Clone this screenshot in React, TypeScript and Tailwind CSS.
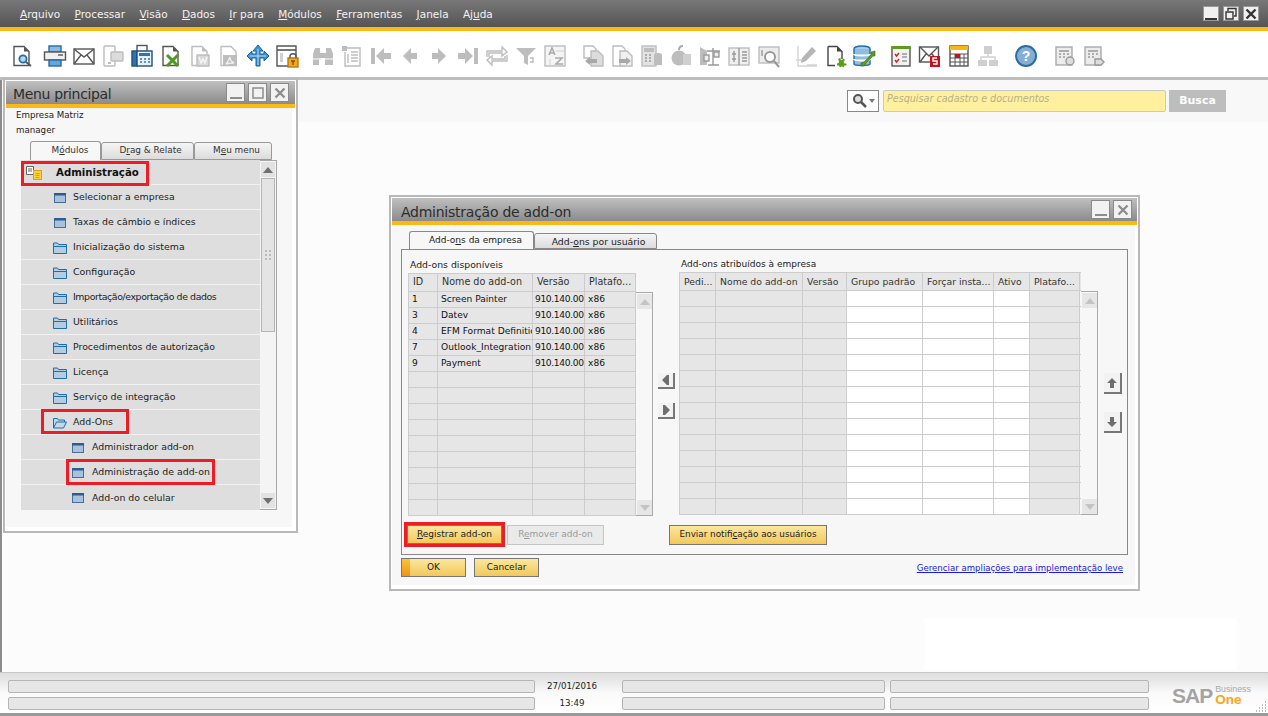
import * as React from "react";

const menus = ["Arquivo", "Processar", "Visão", "Dados", "Ir para", "Módulos", "Ferramentas", "Janela", "Ajuda"];

const G = "#bdbdbd";
const D = "#555555";
const B = "#1f6ea8";

function Ico({ children }: { children: React.ReactNode }) {
    return (
        <svg viewBox="0 0 24 24" className="w-6 h-6 shrink-0" fill="none" strokeWidth="1.4">
            {children}
        </svg>
    );
}

// page with a folded corner, used by lots of toolbar icons
const Page = ({ c = D }: { c?: string }) => (
    <>
        <path d="M4 2.5h10l5 5v14H4z" stroke={c} fill="#fff" />
        <path d="M14 2.5l5 5h-5z" fill={c} />
    </>
);

const toolbar: React.ReactNode[][] = [
    [
        <Ico><Page /><circle cx="13" cy="15" r="3.6" stroke={B} strokeWidth="1.8" fill="#bcd6ee" /><path d="M16 18l5 4" stroke={D} strokeWidth="2" /></Ico>,
    ],
    [
        <Ico><rect x="6" y="2" width="12" height="6" fill="#8fb9de" stroke={B} /><rect x="1.5" y="8" width="21" height="8" fill="#f0f0f0" stroke={D} /><path d="M15 11h5" stroke={D} /><rect x="6" y="16" width="12" height="6" fill="#6aa3d6" stroke={B} /></Ico>,
        <Ico><rect x="2" y="5" width="20" height="15" fill="#fff" stroke={D} /><path d="M2 5l10 8 10-8M2 20l7-9M22 20l-7-9" stroke={D} /></Ico>,
        <Ico><rect x="3" y="2" width="11" height="20" rx="1" stroke={G} fill="#fff" /><rect x="10" y="8" width="12" height="9" rx="1" fill="#dcdcdc" stroke={G} /><rect x="7" y="18" width="3" height="2" fill={G} /></Ico>,
        <Ico><rect x="7" y="1.5" width="10" height="6" fill="#fff" stroke={D} /><rect x="2" y="7" width="5" height="15" fill="#2f74ad" stroke="#1d4f7d" /><rect x="7" y="7" width="15" height="15" fill="#e8f0f7" stroke="#1d4f7d" /><rect x="9" y="9" width="11" height="3" fill="#2f74ad" /><path d="M10 15h2M14 15h2M18 15h2M10 18h2M14 18h2M18 18h2" stroke="#2f74ad" /></Ico>,
        <Ico><Page /><path d="M8 11l11 11M19 11L8 22" stroke="#4e9a1e" strokeWidth="3" /></Ico>,
        <Ico><Page c={G} /><rect x="9" y="11" width="12" height="11" fill="#d8d8d8" stroke={G} /><path d="M11 13l2 6 2-4 2 4 2-6" stroke="#f5f5f5" /></Ico>,
        <Ico><path d="M4 2.5h10l5 5v14H4z" stroke={G} fill="#fff" /><rect x="6" y="11" width="14" height="11" fill={G} /><path d="M9 20c2-2 3-5 4-7 0 3 2 5 4 6-3 0-5 0-8 1z" stroke="#eee" /></Ico>,
        <Ico><path d="M12 1l5 6h-3v3h4V7l5 5-5 5v-3h-4v8h-4v-8H6v3l-5-5 5-5v3h4V7H7z" fill="#3d94d6" stroke="#1d5f93" strokeWidth="1" /><path d="M12 5v16M4 12h16" stroke="#d5e9f8" strokeWidth=".8" /></Ico>,
        <Ico><path d="M13 22H2V2h19v11" fill="#fff" stroke={D} /><path d="M2 6h19" stroke={D} strokeWidth="1.6" /><rect x="5" y="9" width="3" height="9" fill="#d0d0d0" /><rect x="13" y="14" width="10" height="9" fill="#f5a81c" stroke="#b97a10" /><path d="M15 14v-2c0-3 6-3 6 0v2" stroke={D} /><path d="M16 17h4M18 17v4" stroke="#7a5206" /></Ico>,
    ],
    [
        <Ico><path d="M2 10l2-6h5v5h6V4h5l2 6v11h-8v-7h-6v7H2z" fill={G} /><path d="M2 15h8M14 15h8" stroke="#e8e8e8" /></Ico>,
        <Ico><rect x="2" y="2" width="5" height="5" fill={G} /><path d="M7 4h13v18H5V8M8 10v9M11 8h7M11 11h7M11 14h7M11 17h7" stroke={G} /></Ico>,
        <Ico><path d="M2 4h4v16H2zM22 9v6h-7v5L7 12l8-8v5z" fill={G} /></Ico>,
        <Ico><path d="M19 9v6h-6v5l-8-8 8-8v5z" fill={G} /></Ico>,
        <Ico><path d="M5 9v6h6v5l8-8-8-8v5z" fill={G} /></Ico>,
        <Ico><path d="M22 4h-4v16h4zM2 9v6h7v5l8-8-8-8v5z" fill={G} /></Ico>,
        <Ico><path d="M2 13V7h15V3l5 5-5 4V9H4v4M22 11v6H7v4l-5-5 5-4v3h13v-3" stroke={G} fill="#fff" /></Ico>,
        <Ico><path d="M2 4h20l-8 8v9l-4-2v-7z" fill={G} /><path d="M16 14h3v4h-3" stroke={G} /></Ico>,
        <Ico><rect x="2" y="2" width="20" height="20" fill="#f4f4f4" stroke={G} /><path d="M6 11l3-7 3 7M7 9h4M12 14h7l-6 6h7" stroke="#aaa" strokeWidth="1.6" /><path d="M13 7h8M7 15v6" stroke="#ddd" /></Ico>,
    ],
    [
        <Ico><path d="M3 2h9l3 3v9H3z" stroke={G} fill="#fff" /><path d="M10 7h7l5 5v10H10z" fill="#dcdcdc" stroke={G} /><path d="M4 17l5-4v2h7v4H9v2z" fill="#a8a8a8" /></Ico>,
        <Ico><path d="M3 2h9l3 3v17H3z" stroke={G} fill="#fff" /><path d="M10 7h7l5 5v10H10z" fill="#f0f0f0" stroke={G} /><path d="M21 17l-5-4v2H9v4h7v2z" fill="#a8a8a8" /></Ico>,
        <Ico><rect x="2" y="2" width="14" height="20" fill="#e3e3e3" stroke={G} /><rect x="4" y="4" width="10" height="4" fill={G} /><path d="M5 11h2M9 11h2M5 14h2M9 14h2M5 17h2M9 17h2" stroke="#999" /><ellipse cx="18" cy="11" rx="4" ry="2" fill={G} /><rect x="14" y="11" width="8" height="10" fill={G} /></Ico>,
        <Ico><circle cx="10" cy="14" r="7.5" fill={G} /><path d="M10 6c0-3 2-4 4-4" stroke="#aaa" strokeWidth="2" /><rect x="14" y="10" width="8" height="11" fill="#cfcfcf" /></Ico>,
        <Ico><path d="M2 3l7 4v14H2z" fill={G} /><path d="M9 7h13M15 4v17M10 21h11" stroke="#999" /><rect x="6" y="11" width="5" height="6" fill="#eee" stroke="#999" /><rect x="16" y="8" width="5" height="5" fill="#eee" stroke="#999" /></Ico>,
        <Ico><rect x="2" y="4" width="20" height="17" fill="#f0f0f0" stroke={G} /><path d="M12 4v17M15 8h5M15 11h5M15 14h5M15 17h5M7 7v11M5 10h4M5 15h4" stroke="#999" /></Ico>,
        <Ico><rect x="2" y="3" width="20" height="16" fill="#ececec" stroke={G} /><circle cx="13" cy="13" r="5" fill="#fff" stroke="#999" strokeWidth="2" /><path d="M17 17l5 6" stroke="#999" strokeWidth="2" /><path d="M5 6v6" stroke="#999" /></Ico>,
    ],
    [
        <Ico><path d="M3 2v20h19M1 16h8M12 21h10" stroke="#d4d4d4" /><path d="M6 19l1-5 10-11 4 4-10 10z" fill="#b5b5b5" /></Ico>,
        <Ico><path d="M5 2.5h9l5 5V15M12 21.5H5v-19" stroke="#444" fill="#fff" /><path d="M14 2.5l5 5h-5z" fill="#444" /><path d="M17 13v2.2l2 .8 1.6-1.4 1.4 1.4-1.4 1.6.8 2H23.5v2h-2.2l-.8 2-1.8-1.4-1.7 1.4-1-2H14v-2l1.6-.6.4-2-1-1.6 1.4-1.4 1.6 1.4z" fill="#5f9c1a" /></Ico>,
        <Ico><ellipse cx="10" cy="5" rx="8" ry="3" fill="#a9cbe8" stroke={B} /><path d="M2 5v15c0 2 16 2 16 0V5" fill="#8fbde2" stroke={B} /><path d="M2 10c0 2 16 2 16 0M2 15c0 2 16 2 16 0" stroke="#fff" strokeWidth="2" /><path d="M23 7l-4 1v3l-7 7-3 1v3h3l2-3 7-7h2z" fill="#5f9c1a" stroke="#3d6f10" strokeWidth=".6" /></Ico>,
    ],
    [
        <Ico><rect x="3" y="3" width="18" height="19" fill="#f2f2f2" stroke={D} /><rect x="2.5" y="2" width="19" height="3" fill="#5f9c1a" /><path d="M6 10l1.5 2 2.5-3M6 16l1.5 2 2.5-3" stroke="#c22" /><path d="M13 10h5M13 13h5M13 17h5" stroke="#999" /></Ico>,
        <Ico><rect x="1.5" y="3" width="19" height="15" fill="#fff" stroke={D} /><path d="M2 3l9 9 9-9M2 18l6-8M20 18l-6-8" stroke={D} /><rect x="12" y="12" width="10" height="11" fill="#c8101e" /><path d="M19 14h-4v3h4v3h-4" stroke="#fff" /></Ico>,
        <Ico><rect x="3" y="2" width="18" height="20" fill="#fff" stroke={D} /><rect x="3" y="2" width="18" height="4" fill="#f5b912" /><path d="M3 10h18M3 14h18M3 18h18M8 10v12M13 10v12M17 10v12" stroke={D} strokeWidth="1" /><rect x="8" y="10" width="5" height="4" fill="#c8101e" /></Ico>,
        <Ico><rect x="8" y="2" width="8" height="8" fill="#cfcfcf" /><path d="M12 10v3M5 16v-3h14v3" stroke="#cfcfcf" /><rect x="2" y="16" width="9" height="6" fill="#cfcfcf" /><rect x="13" y="16" width="9" height="6" fill="#cfcfcf" /></Ico>,
    ],
    [
        <Ico><circle cx="12" cy="12" r="10" fill="#85aed4" stroke="#2a6d9e" strokeWidth="2" /><text x="12" y="17" textAnchor="middle" fontSize="14" fontWeight="700" fill="#fff" fontFamily="Liberation Sans, sans-serif">?</text></Ico>,
    ],
    [
        <Ico><rect x="3" y="3" width="16" height="18" fill="#ececec" stroke="#aaa" /><path d="M6 7h10M6 10h2M10 10h2M14 10h2M6 13h2M10 13h2" stroke="#999" /><circle cx="17" cy="17" r="4" fill="#ddd" stroke="#999" /></Ico>,
        <Ico><rect x="3" y="3" width="16" height="18" fill="#ececec" stroke="#aaa" /><path d="M6 7h10M6 10h2M10 10h2M14 10h2M6 13h2M10 13h2" stroke="#999" /><path d="M13 15h6l3 3-3 3h-6z" fill="#ddd" stroke="#999" /></Ico>,
    ],
];

// where each group of toolbar icons starts, gap is a hair under 30px in the app
const groupClass = [
    "ml-[10px]",
    "ml-[9px] gap-[5px]",
    "ml-[12px] gap-[5px]",
    "ml-[14px] gap-[5.3px]",
    "ml-[14px] gap-[4.5px]",
    "ml-[13px] gap-[5px]",
    "ml-[14px]",
    "ml-[15px] gap-[5px]",
];

function TitleButton({ kind, dim }: { kind: "min" | "max" | "restore" | "close"; dim?: boolean }) {
    const c = dim ? "#8d8d8d" : "#333333";
    return (
        <div className={dim ? "w-[19px] h-[19px] border border-[#8a8a8a] bg-[#f2f2f2] flex items-center justify-center" : "w-[16px] h-[15px] bg-[#f0f0f0] border border-[#999] flex items-center justify-center"}>
            <svg viewBox="0 0 14 14" className="w-3.5 h-3.5" fill="none" stroke={c} strokeWidth="2">
                {kind === "min" && <path d="M1 12h12" />}
                {kind === "max" && <rect x="2" y="2" width="10" height="10" strokeWidth="1.5" />}
                {kind === "restore" && <path d="M4 4V1.5h8V9h-2M2 5h7v7H2z" strokeWidth="1.4" />}
                {kind === "close" && <path d="M2.5 2.5l9 9M11.5 2.5l-9 9" strokeWidth="2.4" />}
            </svg>
        </div>
    );
}

function WindowIcon() {
    return (
        <svg viewBox="0 0 12 10" className="w-3 h-2.5 shrink-0">
            <rect x=".5" y=".5" width="11" height="9" fill="#a8c2de" stroke="#4a6d96" />
            <rect x="0" y="0" width="12" height="2.5" fill="#2d5c8e" />
        </svg>
    );
}

function FolderIcon({ open }: { open?: boolean }) {
    return (
        <svg viewBox="0 0 14 12" className="w-[14px] h-3 shrink-0">
            {open ? (
                <path d="M.5 11V1.5h4l1 1.5h6v2M.5 11l3-6h10l-3 6z" fill="#c3d8ea" stroke="#1f6ea8" />
            ) : (
                <>
                    <path d="M.5 11.5V1h4l1 1.5h8v9z" fill="#b4cde3" stroke="#1f6ea8" />
                    <path d="M1 4.5h12" stroke="#1f6ea8" />
                </>
            )}
        </svg>
    );
}

function Arrow({ up, color = "#707070" }: { up?: boolean; color?: string }) {
    return (
        <svg viewBox="0 0 10 6" className="w-2.5 h-1.5">
            <path d={up ? "M5 0l5 6H0z" : "M5 6l5-6H0z"} fill={color} />
        </svg>
    );
}

const treeRows = [
    { label: "Selecionar a empresa", icon: "win" },
    { label: "Taxas de câmbio e índices", icon: "win" },
    { label: "Inicialização do sistema", icon: "folder" },
    { label: "Configuração", icon: "folder" },
    { label: "Importação/exportação de dados", icon: "folder", tight: true },
    { label: "Utilitários", icon: "folder" },
    { label: "Procedimentos de autorização", icon: "folder" },
    { label: "Licença", icon: "folder" },
    { label: "Serviço de integração", icon: "folder" },
];

function MenuWindow() {
    return (
        <div className="absolute left-[1px] top-[-2px] w-[295px] h-[455px] bg-white border-2 border-[#b8b8b8] p-px flex flex-col">
            <div className="h-[23px] bg-gradient-to-b from-[#c0c0c0] to-[#8b8b8b] flex items-center pl-[7px] pr-[6px] shrink-0">
                <span className="text-[14px] tracking-[-0.35px] text-[#2c2c2c] flex-1 pt-[4px]">Menu principal</span>
                <div className="flex gap-[3px]">
                    <TitleButton kind="min" dim />
                    <TitleButton kind="max" dim />
                    <TitleButton kind="close" dim />
                </div>
            </div>
            <div className="h-[4px] bg-[#fdb913] shrink-0" />
            <div className="flex-1 bg-[#f7f7f7] mr-[3px] mb-[3px] flex flex-col">
                <div className="pl-[10px] text-[8.7px] leading-[15px] text-[#222]">
                    <div>Empresa Matriz</div>
                    <div>manager</div>
                </div>
                <div className="flex ml-[24px] mt-[3px] h-[19px] items-end text-[8.9px] text-[#333]">
                    <div className="w-[71px] h-[19px] pl-[9px] bg-[#f7f7f7] border border-b-0 border-[#999] rounded-t-[3px] flex items-center justify-center"><span>M<u>ó</u>dulos</span></div>
                    <div className="w-[93px] h-[18px] pl-[6px] bg-gradient-to-b from-[#f5f5f5] to-[#dcdcdc] border border-[#999] rounded-t-[3px] flex items-center justify-center"><span>D<u>r</u>ag &amp; Relate</span></div>
                    <div className="w-[78px] h-[18px] pl-[7px] bg-gradient-to-b from-[#f5f5f5] to-[#dcdcdc] border border-[#999] rounded-t-[3px] flex items-center justify-center"><span>M<u>e</u>u menu</span></div>
                </div>
                <div className="flex ml-[15px] w-[256px] h-[350px]">
                    <div className="w-[239px] flex flex-col text-[9.4px] text-[#222]">
                        <div className="relative h-[25px] shrink-0 pt-px bg-[#dedede] border-b border-[#f2f2f2] flex items-center">
                            <svg viewBox="0 0 16 14" className="w-4 h-3.5 ml-[5px] shrink-0">
                                <path d="M.5.5h7v8h-7z" fill="#fff" stroke="#666" />
                                <path d="M2 3h4M2 5h4" stroke="#666" />
                                <rect x="7.5" y="4.5" width="8" height="9" fill="#fdd23e" stroke="#e69b0a" />
                                <path d="M9.5 7.5h4M9.5 9.5h4M9.5 11.5h4" stroke="#e69b0a" />
                            </svg>
                            <span className="ml-[14px] text-[10.2px] font-bold text-[#111]">Administração</span>
                            <span className="absolute left-0 top-[1px] w-[128px] h-[25px] border-[3px] border-[#ee1c25]" />
                        </div>
                        {treeRows.map((r) => (
                            <div key={r.label} className="h-[25px] shrink-0 pt-px bg-[#dedede] border-b border-[#f2f2f2] flex items-center pl-[32px] gap-[6px]">
                                <span className="w-[14px] flex justify-center">{r.icon === "win" ? <WindowIcon /> : <FolderIcon />}</span>
                                <span className={r.tight ? "tracking-[-0.4px]" : ""}>{r.label}</span>
                            </div>
                        ))}
                        <div className="relative h-[25px] shrink-0 pt-px bg-[#dedede] border-b border-[#f2f2f2] flex items-center pl-[32px] gap-[6px]">
                            <FolderIcon open />
                            <span>Add-Ons</span>
                            <span className="absolute left-[20px] top-[-1px] w-[88px] h-[25px] border-[3px] border-[#ee1c25]" />
                        </div>
                        <div className="h-[25px] shrink-0 pt-px bg-[#dedede] border-b border-[#f2f2f2] flex items-center pl-[51px] gap-[8px]">
                            <WindowIcon />
                            <span>Administrador add-on</span>
                        </div>
                        <div className="relative h-[25px] shrink-0 pt-px bg-[#dedede] border-b border-[#f2f2f2] flex items-center pl-[51px] gap-[8px]">
                            <WindowIcon />
                            <span>Administração de add-on</span>
                            <span className="absolute left-[45px] top-[-1px] w-[149px] h-[26px] border-[3px] border-[#ee1c25]" />
                        </div>
                        <div className="h-[25px] shrink-0 pt-px bg-[#dedede] flex items-center pl-[51px] gap-[8px]">
                            <WindowIcon />
                            <span>Add-on do celular</span>
                        </div>
                    </div>
                    <div className="w-[17px] border border-[#a8a8a8] border-l-0 bg-[#f4f4f4] flex flex-col items-center pt-[1px] pb-[1px]">
                        <div className="h-[15px] w-[14px] bg-[#e2e2e2] flex items-center justify-center shrink-0"><Arrow up /></div>
                        <div className="w-[14px] h-[154px] mt-[1px] bg-[#e4e4e4] border border-[#b5b5b5] flex flex-col items-center justify-center gap-[2px] shrink-0">
                            <div className="grid grid-cols-2 gap-[2px]">
                                {[0, 1, 2, 3, 4, 5].map((i) => <span key={i} className="w-[2px] h-[2px] bg-[#bbb]" />)}
                            </div>
                        </div>
                        <div className="flex-1" />
                        <div className="h-[15px] w-[14px] bg-[#e2e2e2] flex items-center justify-center shrink-0"><Arrow /></div>
                    </div>
                </div>
            </div>
        </div>
    );
}

function Scroll({ className }: { className: string }) {
    return (
        <div className={className}>
            <div className="h-[15px] w-[15px] bg-[#e6e6e6] flex items-center justify-center"><Arrow up color="#c4c4c4" /></div>
            <div className="flex-1" />
            <div className="h-[15px] w-[15px] bg-[#e6e6e6] flex items-center justify-center"><Arrow color="#c4c4c4" /></div>
        </div>
    );
}

const leftRows = [
    ["1", "Screen Painter", "910.140.00.", "x86"],
    ["3", "Datev", "910.140.00.", "x86"],
    ["4", "EFM Format Definition", "910.140.00.", "x86"],
    ["7", "Outlook_Integration", "910.140.00.", "x86"],
    ["9", "Payment", "910.140.00.", "x86"],
    ...Array.from({ length: 9 }, () => ["", "", "", ""]),
];

const leftCols = "grid grid-cols-[30px_95px_52px_51px]";
const rightCols = "grid grid-cols-[37px_87px_44px_76px_71px_36px_50px]";
const rightHead = ["Pedi...", "Nome do add-on", "Versão", "Grupo padrão", "Forçar insta...", "Ativo", "Platafo..."];
const rightWhite = [false, false, false, true, true, true, false];

function ArrowButton({ dir, className }: { dir: "left" | "right" | "up" | "down"; className: string }) {
    const paths = {
        left: "M2 6l5-5v10z M7 1h2v10H7z",
        right: "M10 6L5 1v10z M3 1h2v10H3z",
        up: "M6 1l5 5H8v5H4V6H1z",
        down: "M6 11l5-5H8V1H4v5H1z",
    };
    return (
        <div className={`${className} bg-[#f2f2f2] border-r-2 border-b-2 border-[#777] flex items-center justify-center`}>
            <svg viewBox="0 0 12 12" className="w-3 h-3"><path d={paths[dir]} fill="#6e6e6e" /></svg>
        </div>
    );
}

const yellowBtn = "bg-gradient-to-b from-[#fbe79d] to-[#f3c858] border border-[#777] text-[9px] text-[#222] flex items-center justify-center";

function AddonDialog() {
    return (
        <div className="absolute left-[387px] top-[115px] w-[751px] h-[396px] bg-white border-2 border-[#b8b8b8] p-px flex flex-col">
            <div className="h-[23px] bg-gradient-to-b from-[#c0c0c0] to-[#8b8b8b] flex items-center pl-[9px] pr-[5px] shrink-0">
                <span className="text-[14px] tracking-[-0.25px] text-[#2c2c2c] flex-1 pt-[5px]">Administração de add-on</span>
                <div className="flex gap-[3px]">
                    <TitleButton kind="min" dim />
                    <TitleButton kind="close" dim />
                </div>
            </div>
            <div className="h-[4px] bg-[#fdb913] shrink-0" />
            <div className="flex-1 bg-[#f7f7f7] mr-[2px] mb-[3px] px-[9px] text-[9.3px] text-[#222]">
                <div className="flex ml-[8px] mt-[6px] h-[18px] items-end">
                    <div className="w-[125px] h-[18px] pl-[8px] pt-px text-[9px] border border-b-0 border-[#888] rounded-t-[3px] bg-[#f7f7f7] flex items-center justify-center"><span>Add-o<u>n</u>s da empresa</span></div>
                    <div className="w-[123px] h-[16px] pl-[6px] pt-px border border-[#888] rounded-t-[3px] bg-gradient-to-b from-[#f5f5f5] to-[#dcdcdc] flex items-center justify-center"><span>Add-<u>o</u>ns por usuário</span></div>
                </div>
                <div className="w-[727px] h-[306px] border border-[#888] flex flex-col px-[6px]">
                    <div className="flex h-[267px] pt-[9px]">
                        <div className="w-[244px] shrink-0">
                            <div className="h-[14px] pl-[2px] leading-[11px]">Add-ons disponíveis</div>
                            <div className={`${leftCols} w-[228px] h-[19px] bg-[#e6e6e6] border-y border-[#ccc] text-[#333] text-[9.6px]`}>
                                {["ID", "Nome do add-on", "Versão", "Platafo..."].map((h) => (
                                    <div key={h} className="border-r border-[#ccc] first:border-l flex items-center pl-[4px] overflow-hidden whitespace-nowrap">{h}</div>
                                ))}
                            </div>
                            <div className="flex">
                                <div className="w-[228px]">
                                    {leftRows.map((r, i) => (
                                        <div key={i} className={`${leftCols} h-[16px] bg-[#e6e6e6] border-b border-[#ccc] text-[#111] text-[9.1px]`}>
                                            {r.map((c, j) => (
                                                <div key={j} className={j === 2 ? "border-r border-[#ccc] pl-[2px] pt-[1px] flex items-center overflow-hidden whitespace-nowrap tracking-[-0.35px]" : "border-r border-[#ccc] first:border-l pl-[3px] pt-[1px] flex items-center overflow-hidden whitespace-nowrap"}>{c}</div>
                                            ))}
                                        </div>
                                    ))}
                                </div>
                                <Scroll className="w-[17px] h-[224px] border border-l-0 border-[#aaa] flex flex-col pl-px pt-px" />
                            </div>
                        </div>
                        <div className="w-[27px] shrink-0 flex flex-col pt-[114px] pl-[6px] gap-[14px]">
                            <ArrowButton dir="left" className="w-[17px] h-[16px]" />
                            <ArrowButton dir="right" className="w-[17px] h-[16px]" />
                        </div>
                        <div className="w-[419px] shrink-0">
                            <div className="h-[13px] pl-[2px] leading-[11px] text-[9px]">Add-ons atribuídos à empresa</div>
                            <div className={`${rightCols} w-[402px] h-[19px] bg-[#e6e6e6] border-y border-[#ccc] text-[#333]`}>
                                {rightHead.map((h) => (
                                    <div key={h} className="border-r border-[#ccc] first:border-l flex items-center pl-[4px] overflow-hidden whitespace-nowrap">{h}</div>
                                ))}
                            </div>
                            <div className="flex">
                                <div className="w-[402px]">
                                    {Array.from({ length: 14 }, (_, i) => (
                                        <div key={i} className={`${rightCols} h-[16px] border-b border-[#ccc]`}>
                                            {rightWhite.map((w, j) => (
                                                <div key={j} className={w ? "border-r border-[#ccc] bg-white" : "border-r border-[#ccc] first:border-l bg-[#e6e6e6]"} />
                                            ))}
                                        </div>
                                    ))}
                                </div>
                                <Scroll className="w-[17px] h-[224px] border border-l-0 border-[#aaa] flex flex-col pl-px pt-px" />
                            </div>
                        </div>
                        <div className="flex flex-col pt-[114px] pl-[6px] gap-[18px]">
                            <ArrowButton dir="up" className="w-[18px] h-[21px]" />
                            <ArrowButton dir="down" className="w-[18px] h-[21px]" />
                        </div>
                    </div>
                    <div className="flex items-start pt-[8px] ml-[-1px]">
                        <div className={`${yellowBtn} h-[19px] w-[95px] outline-[3px] outline-[#ee1c25]`}><span><u>R</u>egistrar add-on</span></div>
                        <div className="ml-[5px] w-[97px] h-[20px] text-[9px] bg-[#eaeaea] border border-[#c4c4c4] text-[#9a9a9a] flex items-center justify-center"><span>R<u>e</u>mover add-on</span></div>
                        <div className={`${yellowBtn} ml-[65px] w-[158px] h-[20px]`}><span className="text-[8.8px]">Enviar notifi<u>c</u>ação aos usuários</span></div>
                    </div>
                </div>
                <div className="flex items-start mt-[3px]">
                    <div className="relative w-[65px] h-[19px] text-[9px] bg-gradient-to-b from-[#fbe79d] to-[#f3c858] border border-[#777] flex items-center justify-center">
                        <span className="absolute left-0 top-0 bottom-0 w-[8px] bg-gradient-to-b from-[#f9c33a] to-[#ee9611]" />
                        <span>OK</span>
                    </div>
                    <div className={`${yellowBtn} h-[19px] ml-[8px] w-[65px]`}>Cancelar</div>
                    <a className="ml-auto mt-[4px] mr-[3px] text-[8.6px] text-[#1a1ae0] underline">Gerenciar ampliações para implementação leve</a>
                </div>
            </div>
        </div>
    );
}

function StatusBar() {
    const bar = "h-[13px] rounded-[2px] bg-[#e6e6e6] border border-[#b5b5b5]";
    return (
        <div className="h-[41px] shrink-0 border-t border-[#c8c8c8] bg-gradient-to-b from-[#dddddd] via-[#fafafa] to-[#ffffff] flex pl-[8px] pt-[7px] relative">
            <div className="w-[527px] flex flex-col gap-[4px]"><div className={bar} /><div className={bar} /></div>
            <div className="w-[87px] pr-[13px] flex flex-col gap-[4px] text-[8.7px] text-[#222] items-center">
                <div className="h-[13px] leading-[13px]">27/01/2016</div>
                <div className="h-[13px] leading-[13px]">13:49</div>
            </div>
            <div className="w-[263px] flex flex-col gap-[4px]"><div className={bar} /><div className={bar} /></div>
            <div className="w-[259px] ml-[5px] flex flex-col gap-[4px]"><div className={bar} /><div className={bar} /></div>
            <div className="ml-[23px] mt-[5px] flex items-start">
                <span className="font-['Liberation_Sans',sans-serif] font-bold text-[21px] leading-[22px] tracking-[-1px] text-[#a3a3a3]">SAP</span>
                <div className="ml-[3px] flex flex-col font-['Liberation_Sans',sans-serif]">
                    <span className="text-[8.8px] leading-[9px] text-[#a8a8a8]">Business</span>
                    <span className="text-[13.5px] leading-[12px] font-bold text-[#f5a81c]">One</span>
                </div>
            </div>
            <svg viewBox="0 0 12 12" className="absolute right-[1px] bottom-[1px] w-3 h-3">
                <path d="M10 2h1M7 5h1M10 5h1M4 8h1M7 8h1M10 8h1M1 11h1M4 11h1M7 11h1M10 11h1" stroke="#777" />
            </svg>
        </div>
    );
}

export default function App() {
    return (
        <div className="w-[1268px] h-[716px] overflow-hidden flex flex-col bg-white font-['DejaVu_Sans',sans-serif]">
            {/* Title bar with the menus */}
            <div className="h-[27px] shrink-0 bg-gradient-to-b from-[#787878] to-[#555555] flex items-center pl-[20px] pr-[9px]">
                <div className="flex gap-[14.3px] pt-[2px] text-[10.5px] text-[#f2f2f2] flex-1">
                    {menus.map((m) => {
                        const k = m === "Ajuda" ? 2 : 0;
                        return <span key={m}>{m.slice(0, k)}<u>{m[k]}</u>{m.slice(k + 1)}</span>;
                    })}
                </div>
                <div className="flex gap-[4px]">
                    <TitleButton kind="min" />
                    <TitleButton kind="restore" />
                    <TitleButton kind="close" />
                </div>
            </div>
            <div className="h-[4px] shrink-0 bg-[#fdb913]" />
            {/* Toolbar */}
            <div className="h-[46px] shrink-0 flex items-center pt-[4px] bg-white">
                {toolbar.map((group, i) => (
                    <div key={i} className={`flex ${groupClass[i]}`}>
                        {group.map((icon, j) => <React.Fragment key={j}>{icon}</React.Fragment>)}
                    </div>
                ))}
            </div>
            <div className="h-[3px] shrink-0 bg-[#bdbdbd]" />
            {/* Desktop area with the floating windows */}
            <div className="relative flex-1 bg-[#fcfcfc] border-l-2 border-[#8c8c8c]">
                <div className="h-[42px] bg-[#f8f8f8] flex items-start justify-end pr-[42px] pt-[10px]">
                    <div className="w-[32px] h-[22px] bg-white border border-[#888] flex items-center justify-center gap-[1px]">
                        <svg viewBox="0 0 16 16" className="w-4 h-4"><circle cx="6" cy="6" r="4" fill="#ddd" stroke="#555" strokeWidth="2" /><path d="M9 9l5 5" stroke="#555" strokeWidth="2.5" /></svg>
                        <svg viewBox="0 0 6 4" className="w-1.5 h-1"><path d="M0 0h6L3 4z" fill="#777" /></svg>
                    </div>
                    <div className="ml-[4px] w-[283px] h-[22px] bg-[#fff0a0] border border-[#c8c8c8] rounded-[2px] pl-[3px] text-[9.6px] italic text-[#b5b08a] leading-[15px]">Pesquisar cadastro e documentos</div>
                    <div className="ml-[3px] w-[57px] h-[22px] bg-[#bdbdbd] text-white text-[11px] font-bold flex items-center justify-center">Busca</div>
                </div>
                <MenuWindow />
                <AddonDialog />
                <div className="absolute left-[923px] top-[538px] w-[312px] h-[52px] bg-white" />
            </div>
            <StatusBar />
            <div className="h-[3px] shrink-0 bg-[#9a9a9a]" />
        </div>
    );
}
